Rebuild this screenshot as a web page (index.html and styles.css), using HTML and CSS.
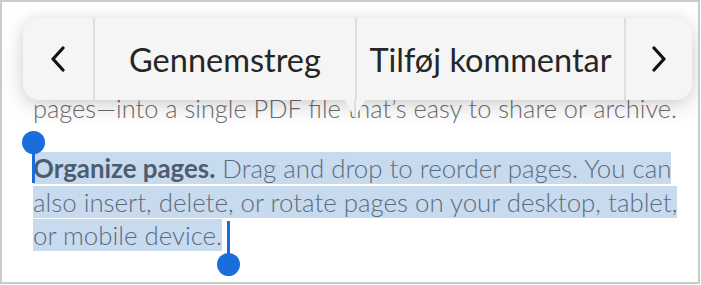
FILE: index.html
```html
<!DOCTYPE html>
<html lang="da">
<head>
<meta charset="utf-8">
<link rel="stylesheet" href="styles.css">
</head>
<body>
<div class="frame">
  <div class="content">
    <p class="prev">pages—into a single PDF file that’s easy to share or archive.</p>
    <p class="para"><span class="sel"><b>Organize pages.</b> Drag and drop to reorder pages. You can also insert, delete, or rotate pages on your desktop, tablet, or mobile device.</span></p>
  </div>
  <div class="handle handle-start"><span class="knob"></span><span class="stick"></span></div>
  <div class="handle handle-end"><span class="stick"></span><span class="knob"></span></div>
  <div class="toolbar">
    <div class="cell nav nav-prev">
      <svg width="16" height="26" viewBox="0 0 16 26"><polyline points="13,2 3,13 13,24" fill="none" stroke="#111" stroke-width="3.2" stroke-linecap="round" stroke-linejoin="round"/></svg>
    </div>
    <div class="cell action action-strike">Gennemstreg</div>
    <div class="cell action action-comment">Tilføj kommentar</div>
    <div class="cell nav nav-next">
      <svg width="16" height="26" viewBox="0 0 16 26"><polyline points="3,2 13,13 3,24" fill="none" stroke="#111" stroke-width="3.2" stroke-linecap="round" stroke-linejoin="round"/></svg>
    </div>
    <div class="pointer"></div>
  </div>
</div>
</body>
</html>
```
FILE: styles.css
```css
html, body {
  margin: 0;
  padding: 0;
  background: #fff;
}
.frame {
  position: relative;
  width: 700px;
  height: 284px;
  box-sizing: border-box;
  border: 2px solid #cbcbcb;
  overflow: hidden;
  font-family: Lato, "Open Sans", sans-serif;
}
.content {
  padding: 90px 10px 0 31px;
}
.prev {
  margin: 0;
  font-size: 25.4px;
  line-height: 33px;
  font-weight: 300;
  color: #6e6e6e;
  white-space: nowrap;
}
.para {
  margin: 27px 0 0;
  font-size: 25.85px;
  line-height: 33.5px;
  font-weight: 300;
  color: #5b6c80;
  width: 655px;
}
.sel {
  background: #c8daee;
}
.sel b {
  color: #4c5d70;
  font-weight: 700;
}
.handle {
  position: absolute;
  display: flex;
  flex-direction: column;
  align-items: center;
  width: 24px;
}
.knob {
  width: 23px;
  height: 23px;
  border-radius: 50%;
  background: #1a6ddb;
}
.stick {
  width: 3px;
  background: #1a6ddb;
  height: 30px;
}
.handle-start {
  left: 19px;
  top: 129px;
}
.handle-start .stick {
  margin-top: -4px;
  height: 33px;
}
.handle-end {
  left: 214px;
  top: 219px;
}
.handle-end .stick {
  height: 40px;
  margin-bottom: -8px;
}
.toolbar {
  position: absolute;
  left: 21px;
  top: 16px;
  width: 669px;
  height: 82px;
  display: flex;
  background: #f5f5f5;
  border-radius: 16px;
  box-shadow: 0 6px 22px rgba(0, 0, 0, 0.16), 0 0 14px rgba(0, 0, 0, 0.06);
}
.cell {
  display: flex;
  align-items: center;
  justify-content: center;
  font-size: 32.5px;
  color: #262626;
  white-space: nowrap;
}
.cell + .cell {
  border-left: 2px solid #dedede;
}
.nav-prev {
  width: 70px;
}
.nav-next {
  flex: 1;
}
.action-strike {
  width: 260px;
}
.action-comment {
  width: 267px;
}
.pointer {
  position: absolute;
  left: 322px;
  top: 82px;
  width: 0;
  height: 0;
  border-left: 10px solid transparent;
  border-right: 10px solid transparent;
  border-top: 18px solid #f5f5f5;
}
.pointer::after {
  content: "";
  position: absolute;
  left: -1px;
  top: -18px;
  width: 2px;
  height: 17px;
  background: #dedede;
}
```
